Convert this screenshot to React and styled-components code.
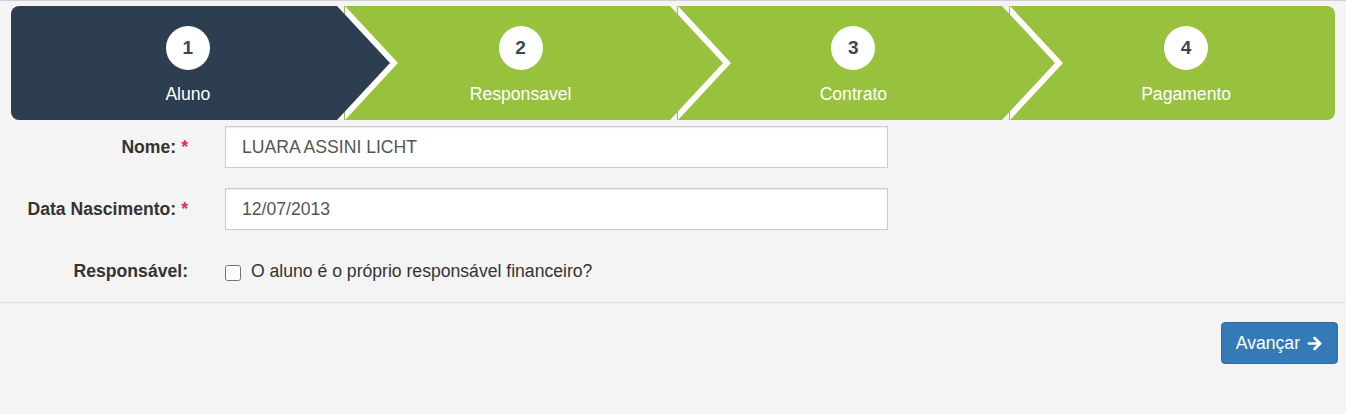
import React from 'react';
import styled, { createGlobalStyle } from 'styled-components';
import { ArrowRight } from 'lucide-react';

const GlobalStyle = createGlobalStyle`
  html, body {
    margin: 0;
    background: #f4f4f4;
    font-family: 'Liberation Sans', Arial, sans-serif;
    color: #333;
  }
`;

const Page = styled.div`
  min-height: 100vh;
  box-sizing: border-box;
  border-top: 1px solid #d0d0d0;
`;

const Wizard = styled.div`
  display: flex;
  gap: 7px;
  height: 114px;
  margin: 5px 11px 0;
`;

const Step = styled.div`
  position: relative;
  flex: 1;
  display: flex;
  flex-direction: column;
  align-items: center;
  box-sizing: border-box;
  padding: 20px 0 0 28px;
  background: ${(p) => (p.$active ? '#2c3e50' : '#98c13d')};

  &:first-child {
    border-radius: 8px 0 0 8px;
  }
  &:last-child {
    border-radius: 0 8px 8px 0;
  }

  &:not(:last-child)::before,
  &:not(:last-child)::after {
    content: '';
    position: absolute;
    top: 0;
    width: 0;
    height: 0;
    border-top: 57px solid transparent;
    border-bottom: 57px solid transparent;
    border-left: 53px solid #fff;
  }
  &:not(:last-child)::before {
    left: calc(100% + 8px);
    z-index: 1;
  }
  &:not(:last-child)::after {
    left: 100%;
    z-index: 2;
    border-left-color: ${(p) => (p.$active ? '#2c3e50' : '#98c13d')};
  }
`;

const StepNumber = styled.span`
  width: 44px;
  height: 44px;
  border-radius: 50%;
  background: #fff;
  color: #34495e;
  display: flex;
  align-items: center;
  justify-content: center;
  font-weight: bold;
  font-size: 19px;
`;

const StepLabel = styled.span`
  margin-top: 14px;
  line-height: 20px;
  font-size: 17.6px;
  color: #fff;
`;

const Form = styled.form`
  margin-top: 6px;
`;

const Row = styled.div`
  display: grid;
  grid-template-columns: 188px 663px;
  column-gap: 37px;
  align-items: center;
  min-height: 42px;
  margin-bottom: 20px;

  &:last-child {
    margin-bottom: 10px;
  }
`;

const Label = styled.label`
  text-align: right;
  font-weight: bold;
  font-size: 17.6px;
  color: #333;
`;

const Required = styled.span`
  color: #e0314b;
  margin-left: 5px;
`;

const Input = styled.input`
  box-sizing: border-box;
  height: 42px;
  width: 100%;
  padding: 0 16px;
  border: 1px solid #ccc;
  border-radius: 0;
  background: #fff;
  color: #555;
  font-family: 'Liberation Sans', Arial, sans-serif;
  font-size: 17.6px;
  box-shadow: inset 0 1px 1px rgba(0, 0, 0, 0.075);
  outline: none;
`;

const CheckLine = styled.label`
  display: flex;
  align-items: center;
  gap: 10px;
  font-size: 17.6px;
  color: #333;
`;

const Check = styled.input`
  width: 16px;
  height: 16px;
  margin: 4px 0 0;
`;

const Footer = styled.div`
  display: flex;
  justify-content: flex-end;
  border-top: 1px solid #e2e2e2;
  padding: 19px 8px 0 0;
`;

const Button = styled.button`
  display: flex;
  align-items: center;
  gap: 5px;
  height: 42px;
  padding: 0 13px 0 14px;
  background: #337ab7;
  border: 1px solid #2e6da4;
  border-radius: 4px;
  color: #fff;
  font-family: 'Liberation Sans', Arial, sans-serif;
  font-size: 17.6px;
  cursor: pointer;
`;

const steps = ['Aluno', 'Responsavel', 'Contrato', 'Pagamento'];

export default function App() {
  return (
    <Page>
      <GlobalStyle />
      <Wizard>
        {steps.map((s, i) => (
          <Step key={s} $active={i === 0}>
            <StepNumber>{i + 1}</StepNumber>
            <StepLabel>{s}</StepLabel>
          </Step>
        ))}
      </Wizard>
      <Form onSubmit={(e) => e.preventDefault()}>
        <Row>
          <Label>
            Nome:<Required>*</Required>
          </Label>
          <Input defaultValue="LUARA ASSINI LICHT" />
        </Row>
        <Row>
          <Label>
            Data Nascimento:<Required>*</Required>
          </Label>
          <Input defaultValue="12/07/2013" />
        </Row>
        <Row>
          <Label>Responsável:</Label>
          <CheckLine>
            <Check type="checkbox" />
            O aluno é o próprio responsável financeiro?
          </CheckLine>
        </Row>
      </Form>
      <Footer>
        <Button type="button">
          Avançar
          <ArrowRight size={19} strokeWidth={3.4} />
        </Button>
      </Footer>
    </Page>
  );
}
